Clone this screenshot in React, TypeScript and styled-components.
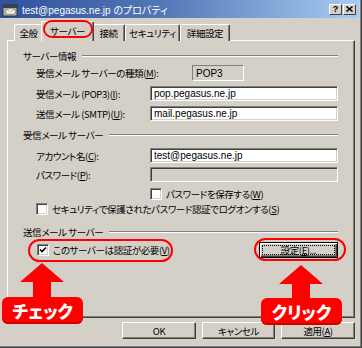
import styled, { createGlobalStyle } from "styled-components";

const face = "#d4d0c8";
const shadow = "#808080";
const dark = "#404040";

const GlobalStyle = createGlobalStyle`
  html, body {
    margin: 0;
    padding: 0;
    background: ${face};
  }
  body {
    font-family: "Noto Sans CJK JP", "Liberation Sans", sans-serif;
    font-size: 9.5px;
    letter-spacing: -0.4px;
    font-feature-settings: "palt";
    color: #000;
  }
  u { text-decoration-thickness: 1px; text-underline-offset: 1px; }
`;

const Dialog = styled.div`
  position: relative;
  width: 362px;
  height: 348px;
  box-sizing: border-box;
  background: ${face};
  border-right: 1px solid ${dark};
  border-bottom: 1px solid ${dark};
  box-shadow: inset -1px -1px ${shadow};
  display: flex;
  flex-direction: column;
  overflow: hidden;
`;

const TitleBar = styled.div`
  height: 18px;
  margin-right: 2px;
  display: flex;
  align-items: center;
  gap: 4px;
  padding: 0 3px 0 2px;
  background: linear-gradient(to right, #2f519c, #5477b6 45%, #a8ccf2);
  color: #fff;
`;

const TitleText = styled.span`
  flex: 1;
  font-family: "Liberation Sans", "Noto Sans CJK JP", sans-serif;
  font-size: 10px;
  letter-spacing: 0;
  white-space: nowrap;
`;

const CaptionButton = styled.div`
  width: 13px;
  height: 11px;
  box-sizing: border-box;
  background: ${face};
  border: 1px solid;
  border-color: #fff ${dark} ${dark} #fff;
  display: flex;
  align-items: center;
  justify-content: center;
  color: #000;
  font-family: "Liberation Sans", sans-serif;
  font-weight: bold;
  font-size: 9px;
  letter-spacing: 0;
  line-height: 1;
`;

const Body = styled.div`
  flex: 1;
  display: flex;
  flex-direction: column;
  padding: 3px 6px 0 7px;
`;

const TabRow = styled.div`
  height: 20px;
  display: flex;
  align-items: flex-end;
  padding-left: 7px;
  position: relative;
  z-index: 1;
  margin-bottom: -1px;
`;

const Tab = styled.div<{ $w: number; $active?: boolean }>`
  width: ${(p) => p.$w}px;
  height: ${(p) => (p.$active ? 20 : 17)}px;
  margin: 0 ${(p) => (p.$active ? -2 : 0)}px;
  box-sizing: border-box;
  background: ${face};
  border: 1px solid;
  border-color: #fff ${dark} transparent #fff;
  border-bottom: none;
  border-radius: 2px 2px 0 0;
  box-shadow: inset -1px 0 ${shadow};
  display: flex;
  align-items: center;
  justify-content: center;
  padding-bottom: ${(p) => (p.$active ? 2 : 0)}px;
  position: relative;
  z-index: ${(p) => (p.$active ? 2 : 0)};
  white-space: nowrap;
`;

const Panel = styled.div`
  height: 278px;
  box-sizing: border-box;
  border: 1px solid;
  border-color: #fff ${dark} ${dark} #fff;
  box-shadow: inset -1px -1px ${shadow};
  padding: 8px 16px 0 15px;
  display: flex;
  flex-direction: column;
`;

const GroupHeader = styled.div<{ $top: number }>`
  height: 14px;
  margin-top: ${(p) => p.$top}px;
  display: flex;
  align-items: center;
  gap: 6px;
  white-space: nowrap;

  &::after {
    content: "";
    flex: 1;
    height: 0;
    border-top: 1px solid ${shadow};
    border-bottom: 1px solid #fff;
  }
`;

const FieldRow = styled.div<{ $top: number; $h?: number }>`
  height: ${(p) => p.$h ?? 15}px;
  margin-top: ${(p) => p.$top}px;
  display: grid;
  grid-template-columns: 114px 1fr;
  align-items: center;
  padding-left: 13px;
  white-space: nowrap;
`;

const TextBox = styled.div<{ $disabled?: boolean }>`
  height: 15px;
  box-sizing: border-box;
  background: ${(p) => (p.$disabled ? face : "#fff")};
  border: 1px solid;
  border-color: ${shadow} #fff #fff ${shadow};
  box-shadow: inset 1px 1px ${dark}, inset -1px -1px ${face};
  padding: 0 3px;
  display: flex;
  align-items: center;
  font-family: "Liberation Sans", sans-serif;
  font-size: 10px;
  letter-spacing: 0;
`;

const StaticBox = styled.div`
  width: 52px;
  height: 16px;
  margin-left: 42px;
  box-sizing: border-box;
  border: 1px solid;
  border-color: ${shadow} #fff #fff ${shadow};
  padding: 0 3px;
  display: flex;
  align-items: center;
  font-family: "Liberation Sans", sans-serif;
  font-size: 10px;
  letter-spacing: 0;
`;

const CheckRow = styled.label<{ $top: number; $indent: number }>`
  height: 13px;
  margin-top: ${(p) => p.$top}px;
  padding-left: ${(p) => p.$indent}px;
  display: flex;
  align-items: center;
  gap: 4px;
  white-space: nowrap;
`;

const Box = styled.span`
  width: 12px;
  height: 12px;
  flex: none;
  box-sizing: border-box;
  background: #fff;
  border: 1px solid;
  border-color: ${shadow} #fff #fff ${shadow};
  box-shadow: inset 1px 1px ${dark}, inset -1px -1px ${face};
  display: flex;
  align-items: center;
  justify-content: center;
`;

const AuthRow = styled.div`
  height: 16px;
  margin-top: 3px;
  display: flex;
  align-items: center;
  justify-content: space-between;
  padding-left: 14px;
`;

const Button = styled.div<{ $w: number }>`
  width: ${(p) => p.$w}px;
  height: 17px;
  box-sizing: border-box;
  background: ${face};
  border: 1px solid;
  border-color: #fff ${dark} ${dark} #fff;
  box-shadow: inset -1px -1px ${shadow};
  display: flex;
  align-items: center;
  justify-content: center;
  white-space: nowrap;
`;

const DefaultButton = styled(Button)`
  height: 16px;
  border: 1px solid #000;
  box-shadow: inset 1px 1px #fff, inset -1px -1px ${dark}, inset -2px -2px ${shadow};
  padding: 2px;

  & > span {
    flex: 1;
    align-self: stretch;
    display: flex;
    align-items: center;
    justify-content: center;
    outline: 1px dotted #000;
    outline-offset: -1px;
  }
`;

const Footer = styled.div`
  display: flex;
  justify-content: flex-end;
  gap: 6px;
  margin-top: 4px;
`;

const Ring = styled.div<{ $x: number; $y: number; $w: number; $h: number }>`
  position: absolute;
  left: ${(p) => p.$x}px;
  top: ${(p) => p.$y}px;
  width: ${(p) => p.$w}px;
  height: ${(p) => p.$h}px;
  box-sizing: border-box;
  border: 2.5px solid #f00;
  border-radius: ${(p) => p.$h / 2}px;
  pointer-events: none;
  z-index: 5;
`;

const ArrowSvg = styled.svg<{ $x: number; $y: number }>`
  position: absolute;
  left: ${(p) => p.$x}px;
  top: ${(p) => p.$y}px;
  z-index: 5;
`;

const Callout = styled.div<{ $x: number; $y: number }>`
  position: absolute;
  left: ${(p) => p.$x}px;
  top: ${(p) => p.$y}px;
  width: 81px;
  height: 27px;
  border-radius: 6px;
  background: #f00;
  color: #fff;
  font-family: "Noto Sans CJK JP", sans-serif;
  font-weight: 900;
  font-size: 17px;
  letter-spacing: 0;
  display: flex;
  align-items: center;
  justify-content: center;
  z-index: 6;
  box-shadow: inset 0 -2px #d00000;
`;

function Arrow({ x, y }: { x: number; y: number }) {
  return (
    <ArrowSvg $x={x} $y={y} width="44" height="36" viewBox="0 0 44 36">
      <polygon points="22,0 44,19 31,19 31,36 13,36 13,19 0,19" fill="#f00" />
    </ArrowSvg>
  );
}

function Check({ checked }: { checked?: boolean }) {
  return (
    <Box>
      {checked && (
        <svg width="8" height="8" viewBox="0 0 8 8">
          <path d="M1 3.5 L3 5.5 L7 1.5" stroke="#000" strokeWidth="1.6" fill="none" />
        </svg>
      )}
    </Box>
  );
}

export default function App() {
  return (
    <>
      <GlobalStyle />
      <Dialog>
        <TitleBar>
          <svg width="16" height="15" viewBox="0 0 16 15">
            <rect x="1" y="3" width="14" height="11" fill="#b8b8b0" stroke="#303030" />
            <rect x="1" y="3" width="14" height="3" fill="#404040" />
            <path d="M4 7 H13 V12 H4 Z" fill="#fff" stroke="#707070" strokeWidth="0.6" />
            <path d="M4 7 L8.5 10 L13 7" fill="none" stroke="#707070" strokeWidth="0.6" />
          </svg>
          <TitleText>test@pegasus.ne.jp のプロパティ</TitleText>
          <CaptionButton>?</CaptionButton>
          <CaptionButton style={{ marginLeft: -3 }}>
            <svg width="7" height="6" viewBox="0 0 7 6">
              <path d="M0.5 0.5 L6.5 5.5 M6.5 0.5 L0.5 5.5" stroke="#000" strokeWidth="1.5" />
            </svg>
          </CaptionButton>
        </TitleBar>

        <Body>
          <TabRow>
            <Tab $w={29}>全般</Tab>
            <Tab $w={53} $active>サーバー</Tab>
            <Tab $w={33}>接続</Tab>
            <Tab $w={55}>セキュリティ</Tab>
            <Tab $w={50}>詳細設定</Tab>
          </TabRow>

          <Panel>
            <GroupHeader $top={0}>サーバー情報</GroupHeader>
            <FieldRow $top={2} $h={16}>
              <span>
                受信メール サーバーの種類(<u>M</u>):
              </span>
              <StaticBox>POP3</StaticBox>
            </FieldRow>
            <FieldRow $top={5}>
              <span>
                受信メール (POP3)(<u>I</u>):
              </span>
              <TextBox>pop.pegasus.ne.jp</TextBox>
            </FieldRow>
            <FieldRow $top={5}>
              <span>
                送信メール (SMTP)(<u>U</u>):
              </span>
              <TextBox>mail.pegasus.ne.jp</TextBox>
            </FieldRow>

            <GroupHeader $top={7}>受信メール サーバー</GroupHeader>
            <FieldRow $top={6}>
              <span>
                アカウント名(<u>C</u>):
              </span>
              <TextBox>test@pegasus.ne.jp</TextBox>
            </FieldRow>
            <FieldRow $top={4}>
              <span>
                パスワード(<u>P</u>):
              </span>
              <TextBox $disabled />
            </FieldRow>
            <CheckRow $top={5} $indent={127}>
              <Check />
              <span>
                パスワードを保存する(<u>W</u>)
              </span>
            </CheckRow>
            <CheckRow $top={2} $indent={13}>
              <Check />
              <span>
                セキュリティで保護されたパスワード認証でログオンする(<u>S</u>)
              </span>
            </CheckRow>

            <GroupHeader $top={10}>送信メール サーバー</GroupHeader>
            <AuthRow>
              <CheckRow $top={0} $indent={0}>
                <Check checked />
                <span>
                  このサーバーは認証が必要(<u>V</u>)
                </span>
              </CheckRow>
              <DefaultButton $w={79}>
                <span>
                  設定(<u>E</u>)...
                </span>
              </DefaultButton>
            </AuthRow>
          </Panel>

          <Footer>
            <Button $w={74}>OK</Button>
            <Button $w={73}>キャンセル</Button>
            <Button $w={74}>
              適用(<u>A</u>)
            </Button>
          </Footer>
        </Body>

        <Ring $x={43} $y={20} $w={50} $h={18} />
        <Ring $x={28} $y={239} $w={145} $h={23} />
        <Ring $x={254} $y={238} $w={92} $h={23} />

        <Arrow x={20} y={263} />
        <Arrow x={279} y={265} />
        <Callout $x={2} $y={297}>チェック</Callout>
        <Callout $x={261} $y={298}>クリック</Callout>
      </Dialog>
    </>
  );
}
